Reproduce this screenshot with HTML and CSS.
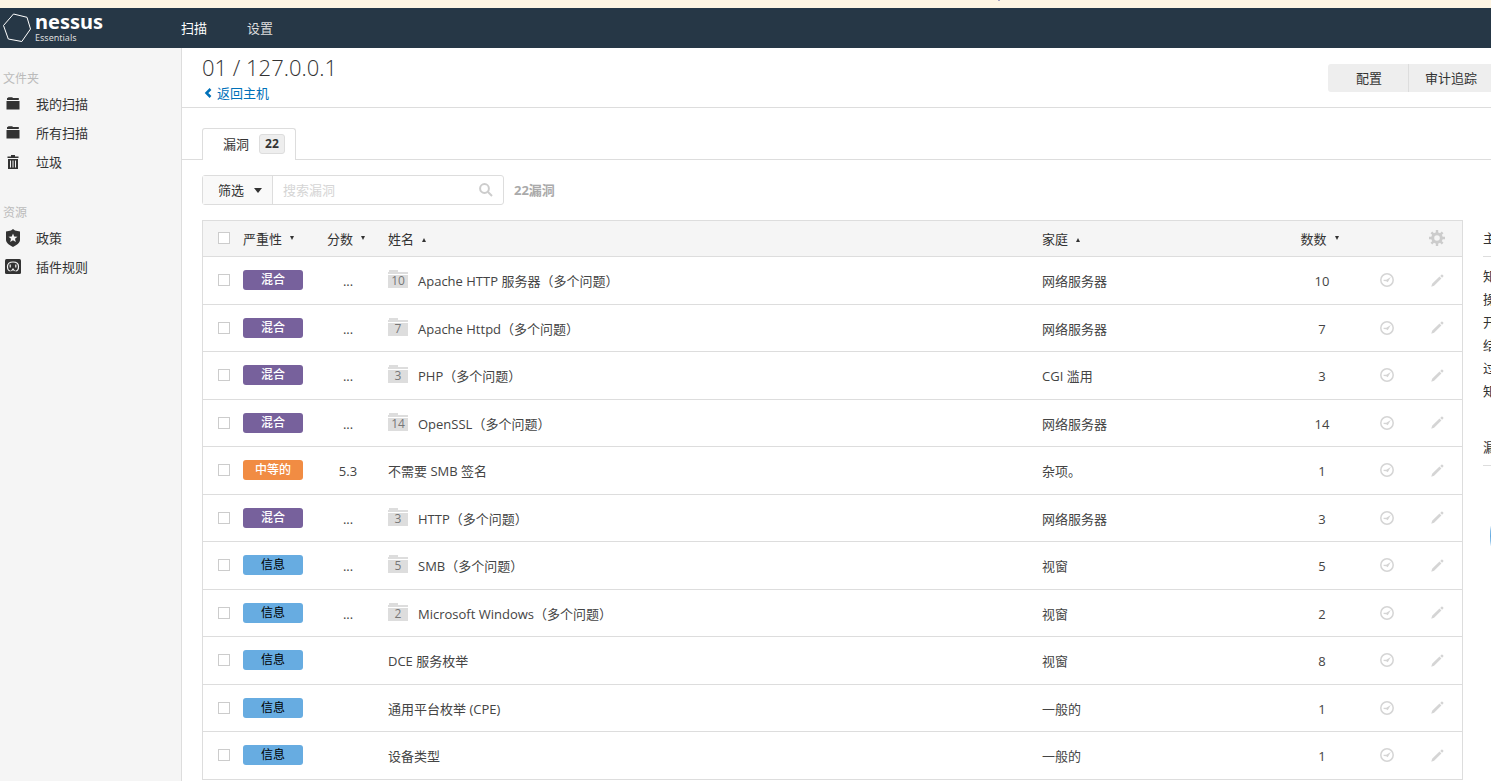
FILE: index.html
```html
<!DOCTYPE html>
<html lang="zh-CN">
<head>
<meta charset="utf-8">
<title>Nessus Essentials</title>
<link rel="stylesheet" href="styles.css">
</head>
<body>
<svg class="sprite" aria-hidden="true">
  <symbol id="folder" viewBox="0 0 14 13"><path d="M1 3V1.200L2.600.3h3.600l.8.700h5.800V3zM.5 4h13v8.500H.5z"/></symbol>
  <symbol id="trash" viewBox="0 0 12 14"><path fill-rule="evenodd" d="M4 0h4v1.500h3.500V3H.500V1.500H4zM1 4h10v10H1zm2 1.500v7h1v-7zm2.500 0v7h1v-7zm2.500 0v7h1v-7z"/></symbol>
  <symbol id="shield" viewBox="0 0 14 18"><path fill-rule="evenodd" d="M7 0l2 1.500 5 1v8.500c0 3-3.500 5-7 7-3.500-2-7-4-7-7V2.500l5-1zM7 4.500L5.800 7.500l-3.300.2 2.500 2.100-.8 3.200L7 11.300 9.800 13 9 9.800l2.500-2.100-3.300-.2z"/></symbol>
  <symbol id="plugin" viewBox="0 0 16 16"><rect width="16" height="15" rx="1.500"/><path d="M5.500 12C3 12 2.500 9.500 2.500 7.500 2.500 4.500 4.500 3 8 3s5.500 1.500 5.500 4.500c0 2-.5 4.500-3 4.500M5.200 5.500v3M10.800 5.500v3M6.500 12l1.500-2 1.500 2" fill="none" stroke="#f5f5f5" stroke-width="1.200"/></symbol>
  <symbol id="clock" viewBox="0 0 14 14"><circle cx="7" cy="7" r="6.200" fill="none" stroke="currentColor" stroke-width="1.500"/><path d="M10.800 4L7.700 9.300 6.300 8.200 3.600 8V6.800H6.300z"/></symbol>
  <symbol id="pencil" viewBox="0 0 13 13"><path d="M.3 12.700l.8-2.900L8.500 2.600l1.900 1.900L3.100 11.800zM9.200 1.900L10.700.5c.5-.5 2.300 1.300 1.800 1.800L11.100 3.800z"/></symbol>
</svg>

<div class="notice"></div>
<header class="topbar">
  <a class="brand" href="#" aria-label="nessus Essentials">
    <svg class="brand-mark" viewBox="0 0 30 30"><path d="M11.500 1L25 4.300 28.500 16 19.800 28.500 6.300 26 1.500 12.500z"/></svg>
    <span class="brand-text"><span class="brand-name">nessus</span><span class="brand-edition">Essentials</span></span>
  </a>
  <nav class="topnav"><a class="active" href="#">扫描</a><a href="#">设置</a></nav>
</header>

<div class="layout">
  <aside class="sidebar">
    <h2>文件夹</h2>
    <ul>
      <li><a href="#"><svg class="i-folder"><use href="#folder"/></svg>我的扫描</a></li>
      <li><a href="#"><svg class="i-folder"><use href="#folder"/></svg>所有扫描</a></li>
      <li><a href="#"><svg class="i-trash"><use href="#trash"/></svg>垃圾</a></li>
    </ul>
    <h2>资源</h2>
    <ul>
      <li><a href="#"><svg class="i-shield"><use href="#shield"/></svg>政策</a></li>
      <li><a href="#"><svg class="i-plugin"><use href="#plugin"/></svg>插件规则</a></li>
    </ul>
  </aside>

  <main class="main">
    <div class="page-head">
      <div>
        <h1>01 / 127.0.0.1</h1>
        <a class="back" href="#"><svg viewBox="0 0 8 10"><path d="M6.500 1L2.500 5l4 4"/></svg>返回主机</a>
      </div>
      <div class="actions"><button type="button">配置</button><button type="button">审计追踪</button></div>
    </div>

    <div class="tabs"><a class="tab" href="#">漏洞<span class="badge">22</span></a></div>

    <div class="toolbar">
      <div class="search-group">
        <button class="filter" type="button">筛选<span class="caret"></span></button>
        <input type="text" placeholder="搜索漏洞" aria-label="搜索漏洞">
        <svg class="i-search" viewBox="0 0 14 14"><circle cx="5.500" cy="5.500" r="4.400"/><path d="M9 9l4 4"/></svg>
      </div>
      <strong class="total">22漏洞</strong>
    </div>

    <div class="content">
      <table class="vulns">
        <colgroup><col class="c-check"><col class="c-sev"><col class="c-score"><col class="c-name"><col class="c-family"><col class="c-count"><col class="c-icon"><col class="c-icon"></colgroup>
        <thead>
          <tr>
            <th class="check"><input type="checkbox" aria-label="全选"></th>
            <th>严重性<span class="sort down"></span></th>
            <th class="score-head">分数<span class="sort down"></span></th>
            <th>姓名<span class="sort up"></span></th>
            <th>家庭<span class="sort up"></span></th>
            <th class="num">数数<span class="sort down"></span></th>
            <th></th>
            <th class="icon"><svg class="i-gear" viewBox="0 0 16 16"><circle cx="8" cy="8" r="4.300" fill="none" stroke="currentColor" stroke-width="3"/><path d="M8 0v3M8 13v3M0 8h3M13 8h3M2.400 2.400l2 2M11.600 11.600l2 2M13.600 2.400l-2 2M4.400 11.600l-2 2" stroke="currentColor" stroke-width="2.400"/></svg></th>
          </tr>
        </thead>
        <tbody>
          <tr><td class="check"><input type="checkbox" aria-label="选择"></td><td class="level"><span class="sev mixed">混合</span></td><td class="num">...</td><td><span class="name"><span class="group">10</span>Apache HTTP 服务器（多个问题）</span></td><td>网络服务器</td><td class="num">10</td><td class="icon"><svg class="i-clock"><use href="#clock"/></svg></td><td class="icon"><svg class="i-pencil"><use href="#pencil"/></svg></td></tr>
          <tr><td class="check"><input type="checkbox" aria-label="选择"></td><td class="level"><span class="sev mixed">混合</span></td><td class="num">...</td><td><span class="name"><span class="group">7</span>Apache Httpd（多个问题）</span></td><td>网络服务器</td><td class="num">7</td><td class="icon"><svg class="i-clock"><use href="#clock"/></svg></td><td class="icon"><svg class="i-pencil"><use href="#pencil"/></svg></td></tr>
          <tr><td class="check"><input type="checkbox" aria-label="选择"></td><td class="level"><span class="sev mixed">混合</span></td><td class="num">...</td><td><span class="name"><span class="group">3</span>PHP（多个问题）</span></td><td>CGI 滥用</td><td class="num">3</td><td class="icon"><svg class="i-clock"><use href="#clock"/></svg></td><td class="icon"><svg class="i-pencil"><use href="#pencil"/></svg></td></tr>
          <tr><td class="check"><input type="checkbox" aria-label="选择"></td><td class="level"><span class="sev mixed">混合</span></td><td class="num">...</td><td><span class="name"><span class="group">14</span>OpenSSL（多个问题）</span></td><td>网络服务器</td><td class="num">14</td><td class="icon"><svg class="i-clock"><use href="#clock"/></svg></td><td class="icon"><svg class="i-pencil"><use href="#pencil"/></svg></td></tr>
          <tr><td class="check"><input type="checkbox" aria-label="选择"></td><td class="level"><span class="sev medium">中等的</span></td><td class="num">5.3</td><td><span class="name">不需要 SMB 签名</span></td><td>杂项。</td><td class="num">1</td><td class="icon"><svg class="i-clock"><use href="#clock"/></svg></td><td class="icon"><svg class="i-pencil"><use href="#pencil"/></svg></td></tr>
          <tr><td class="check"><input type="checkbox" aria-label="选择"></td><td class="level"><span class="sev mixed">混合</span></td><td class="num">...</td><td><span class="name"><span class="group">3</span>HTTP（多个问题）</span></td><td>网络服务器</td><td class="num">3</td><td class="icon"><svg class="i-clock"><use href="#clock"/></svg></td><td class="icon"><svg class="i-pencil"><use href="#pencil"/></svg></td></tr>
          <tr><td class="check"><input type="checkbox" aria-label="选择"></td><td class="level"><span class="sev info">信息</span></td><td class="num">...</td><td><span class="name"><span class="group">5</span>SMB（多个问题）</span></td><td>视窗</td><td class="num">5</td><td class="icon"><svg class="i-clock"><use href="#clock"/></svg></td><td class="icon"><svg class="i-pencil"><use href="#pencil"/></svg></td></tr>
          <tr><td class="check"><input type="checkbox" aria-label="选择"></td><td class="level"><span class="sev info">信息</span></td><td class="num">...</td><td><span class="name"><span class="group">2</span>Microsoft Windows（多个问题）</span></td><td>视窗</td><td class="num">2</td><td class="icon"><svg class="i-clock"><use href="#clock"/></svg></td><td class="icon"><svg class="i-pencil"><use href="#pencil"/></svg></td></tr>
          <tr><td class="check"><input type="checkbox" aria-label="选择"></td><td class="level"><span class="sev info">信息</span></td><td class="num"></td><td><span class="name">DCE 服务枚举</span></td><td>视窗</td><td class="num">8</td><td class="icon"><svg class="i-clock"><use href="#clock"/></svg></td><td class="icon"><svg class="i-pencil"><use href="#pencil"/></svg></td></tr>
          <tr><td class="check"><input type="checkbox" aria-label="选择"></td><td class="level"><span class="sev info">信息</span></td><td class="num"></td><td><span class="name">通用平台枚举 (CPE)</span></td><td>一般的</td><td class="num">1</td><td class="icon"><svg class="i-clock"><use href="#clock"/></svg></td><td class="icon"><svg class="i-pencil"><use href="#pencil"/></svg></td></tr>
          <tr><td class="check"><input type="checkbox" aria-label="选择"></td><td class="level"><span class="sev info">信息</span></td><td class="num"></td><td><span class="name">设备类型</span></td><td>一般的</td><td class="num">1</td><td class="icon"><svg class="i-clock"><use href="#clock"/></svg></td><td class="icon"><svg class="i-pencil"><use href="#pencil"/></svg></td></tr>
        </tbody>
      </table>
      <section class="details">
        <h3>主</h3>
        <ul><li>知</li><li>操</li><li>开</li><li>结</li><li>过</li><li>知</li></ul>
        <h3>漏</h3>
        <svg class="donut" viewBox="0 0 100 100"><circle cx="50" cy="50" r="40"/></svg>
      </section>
    </div>
  </main>
</div>
</body>
</html>
```
FILE: styles.css
```css
* { box-sizing: border-box; }

html, body { height: 100%; }

body {
  margin: 0;
  display: flex;
  flex-direction: column;
  overflow: hidden;
  background: #fff;
  color: #333;
  font: 13px/20px "Open Sans", "Noto Sans CJK SC", sans-serif;
}

a { color: inherit; text-decoration: none; }
ul { list-style: none; margin: 0; padding: 0; }
h1, h2, h3 { margin: 0; font-weight: 400; }
button, input { font: inherit; color: inherit; margin: 0; }
svg { display: block; flex: none; fill: currentColor; }
.sprite { position: absolute; width: 0; height: 0; }

.notice { flex: none; height: 8px; background: linear-gradient(#a9a5c4, #a9a5c4) 67% 0 / 2px 1px no-repeat #fef5e3; }

/* Top bar */
.topbar {
  flex: none;
  display: flex;
  align-items: center;
  height: 40px;
  background: #263746;
  color: #fff;
}
.brand { display: flex; align-items: center; gap: 3px; width: 181px; padding-left: 2px; }
.brand-mark { width: 30px; height: 30px; fill: none; stroke: #fff; stroke-width: 1; }
.brand-text { display: flex; flex-direction: column; }
.brand-name { font: 700 20px/20px "Noto Sans", sans-serif; }
.brand-edition { font: 9px/12px "Noto Sans", sans-serif; color: #ddd; }
.topnav { display: flex; gap: 40px; }
.topnav a { color: #ddd; }
.topnav .active { color: #fff; }

/* Sidebar */
.layout { flex: 1; display: flex; min-height: 0; }
.sidebar {
  flex: none;
  width: 182px;
  padding-top: 20px;
  background: #f5f5f5;
  border-right: 1px solid #ddd;
}
.sidebar h2 { padding-left: 3px; color: #bbb; font-size: 12px; line-height: 21px; }
.sidebar ul { margin-bottom: 26px; }
.sidebar a {
  display: grid;
  grid-template-columns: 16px auto;
  align-items: center;
  justify-content: start;
  justify-items: center;
  gap: 15px;
  height: 29px;
  padding-left: 5px;
}
.i-folder { width: 14px; height: 13px; }
.i-trash { width: 12px; height: 14px; }
.i-shield { width: 14px; height: 18px; }
.i-plugin { width: 16px; height: 16px; }

/* Page heading */
.main { flex: 1; min-width: 0; }
.page-head {
  display: flex;
  justify-content: space-between;
  height: 60px;
  padding: 3px 0 0 20px;
  border-bottom: 1px solid #ddd;
}
h1 { font-size: 22px; font-weight: 300; line-height: 32px; }
.back { display: flex; align-items: center; gap: 5px; padding-left: 2px; color: #0071b9; }
.back svg { width: 8px; height: 10px; fill: none; stroke: currentColor; stroke-width: 2.500; }
.actions { display: flex; padding-top: 13px; }
.actions button {
  height: 28px;
  width: 81px;
  padding: 0 0 0 2px;
  border: 0;
  background: #eee;
}
.actions button:first-child { border-radius: 3px 0 0 3px; border-right: 1px solid #ddd; }
.actions button:last-child { width: 82px; }

/* Tabs */
.tabs { display: flex; height: 52px; padding: 20px 0 0 20px; border-bottom: 1px solid #ddd; }
.tab {
  display: flex;
  align-items: center;
  gap: 10px;
  height: 32px;
  padding: 0 10px 1px 20px;
  background: #fff;
  border: 1px solid #ddd;
  border-bottom: 0;
  border-radius: 3px 3px 0 0;
}
.badge {
  padding: 0 5px;
  border: 1px solid #ddd;
  border-radius: 3px;
  background: #eee;
  font-size: 12px;
  font-weight: 700;
  line-height: 18px;
}

/* Toolbar */
.toolbar { display: flex; align-items: center; gap: 10px; padding: 15px 0 15px 20px; }
.search-group {
  display: flex;
  align-items: center;
  width: 302px;
  height: 30px;
  padding-right: 10px;
  border: 1px solid #ddd;
  border-radius: 3px;
}
.filter {
  display: flex;
  align-items: center;
  gap: 10px;
  width: 70px;
  height: 28px;
  padding: 0 0 0 15px;
  border: 0;
  border-right: 1px solid #ddd;
  background: #f9f9f9;
}
.caret { border: 4px solid transparent; border-top: 5px solid #333; border-bottom: 0; }
.search-group input { flex: 1; min-width: 0; height: 28px; padding: 0 10px; border: 0; background: none; outline: 0; }
.search-group input::placeholder { color: #d5d5d5; opacity: 1; }
.i-search { width: 14px; height: 14px; fill: none; stroke: #ccc; stroke-width: 2; }
.total { color: #aaa; font-weight: 700; }

/* Vulnerability table */
.content { display: grid; grid-template-columns: minmax(0, 1fr) 8px; gap: 20px; padding-left: 20px; }
.vulns {
  width: 100%;
  table-layout: fixed;
  border-collapse: separate;
  border-spacing: 0;
  border: 1px solid #ddd;
  border-bottom: 0;
}
.c-check { width: 40px; }
.c-sev { width: 75px; }
.c-score { width: 60px; }
.c-family { width: 240px; }
.c-count { width: 80px; }
.c-icon { width: 50px; }
.vulns th, .vulns td { padding: 0; border-bottom: 1px solid #ddd; text-align: left; font-weight: 400; }
.vulns th { height: 36px; background: #f5f5f5; }
.vulns td { height: 47px; padding-top: 1px; color: #444; }
.vulns tbody tr:nth-child(odd) td { height: 48px; }
.vulns th:nth-child(4), .vulns td:nth-child(4) { padding-left: 10px; }
.vulns .num { text-align: center; }
.vulns .score-head { padding-left: 9px; white-space: nowrap; }
.vulns .check { padding-left: 15px; }
.vulns .check, .vulns .level, .vulns .icon { padding-top: 0; padding-bottom: 1px; }
.check input {
  appearance: none;
  display: block;
  width: 12px;
  height: 12px;
  border: 1px solid #ccc;
  background: #fff;
}
.sort { display: inline-block; margin: 0 5px 0 8px; border: 2px solid transparent; vertical-align: 4px; }
.down { border-top: 4px solid #333; border-bottom: 0; }
.up { border-bottom: 4px solid #333; border-top: 0; vertical-align: 2px; }
.sev {
  display: block;
  width: 60px;
  border-radius: 3px;
  color: #fff;
  font-size: 12px;
  font-weight: 500;
  line-height: 20px;
  text-align: center;
}
.mixed { background: #77619c; }
.medium { background: #f18c43; }
.info { background: #67ace1; color: #000; font-weight: 400; }
.name { display: flex; align-items: center; gap: 10px; }
.group {
  width: 20px;
  height: 22px;
  background: linear-gradient(#ddd, #ddd) 1px 0 / 9px 3px no-repeat, linear-gradient(#ddd, #ddd) 0 2px / 20px 2px no-repeat, linear-gradient(#ddd, #ddd) 0 5px / 20px 13px no-repeat;
  color: #777;
  font-size: 12px;
  line-height: 22px;
  text-align: center;
}
.icon svg { margin: 0 auto; color: #d5d5d5; }
.i-clock { width: 14px; height: 14px; }
.i-pencil { width: 13px; height: 13px; }
.icon .i-gear { width: 16px; height: 16px; color: #ccc; }

/* Host details, running past the right edge */
.details { overflow: hidden; white-space: nowrap; }
.details h3 { height: 37px; padding-top: 8px; border-bottom: 1px solid #ddd; font-size: 13px; }
.details ul { padding: 8px 0 26px; line-height: 23px; }
.donut { width: 100px; height: 100px; margin: 20px 0 0 7px; fill: none; stroke: #67ace1; stroke-width: 20; }
```
